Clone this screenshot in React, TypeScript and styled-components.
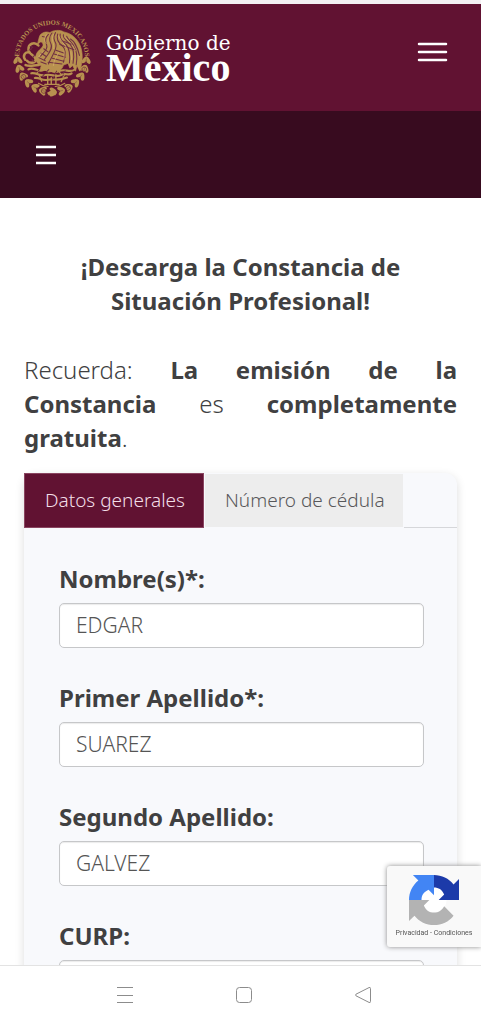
import React, { useState } from "react";
import styled, { createGlobalStyle } from "styled-components";

const GlobalStyle = createGlobalStyle`
  * { box-sizing: border-box; }
  body {
    margin: 0;
    background: #fff;
    color: #404041;
    font-family: "Noto Sans", "Open Sans", sans-serif;
    font-size: 24px;
    line-height: 34px;
  }
  button { font: inherit; cursor: pointer; }
`;

const Screen = styled.div`
  display: flex;
  flex-direction: column;
  height: 100vh;
`;

const Page = styled.div`
  flex: 1;
  min-height: 0;
  overflow-y: auto;
  scrollbar-width: none;
  border-top: 4px solid #f3f0f3;
`;

const Header = styled.header`
  display: flex;
  align-items: center;
  justify-content: space-between;
  padding: 10px 32px 11px 10px;
  background: #611232;
`;

const Brand = styled.a`
  display: flex;
  align-items: center;
  gap: 11px;
  color: #fff;
  text-decoration: none;
`;

const Wordmark = styled.span`
  display: flex;
  flex-direction: column;
  font-family: "Liberation Serif", serif;
  font-weight: 700;
`;

const Country = styled.span`
  font-size: 40px;
  line-height: 29px;
`;

const Government = styled.span`
  font-family: "DejaVu Serif", serif;
  font-weight: 400;
  font-size: 20px;
  line-height: 20px;
`;

const IconButton = styled.button`
  display: flex;
  padding: 0;
  border: 0;
  background: none;
  color: ${(p) => p.color ?? "#fff"};
`;

const MenuButton = styled(IconButton)`
  align-self: flex-start;
  padding-top: 26px;
`;

const SubNav = styled.nav`
  display: flex;
  align-items: center;
  height: 87px;
  padding: 0 35px;
  background: #380b1f;
`;

const Main = styled.main`
  padding: 52px 24px 32px;
`;

const Title = styled.h1`
  margin: 0 0 35px;
  font-size: 24px;
  line-height: 34px;
  font-weight: 700;
  text-align: center;
`;

const Reminder = styled.p`
  margin: 0 0 18px;
  font-weight: 300;
  text-align: justify;

  strong { font-weight: 700; }
`;

const Card = styled.section`
  border-radius: 12px;
  background: #f8f9fc;
  box-shadow: 0 3px 10px rgba(0, 0, 0, 0.14);
`;

const TabList = styled.div`
  display: flex;
  align-items: flex-start;
  height: 55px;
  box-shadow: inset 0 -1px #d6d7da;
`;

const Tab = styled.button<{ $active: boolean }>`
  height: 55px;
  padding: 0 18px 2px 20px;
  border: 1px solid ${(p) => (p.$active ? "#8a4560" : "#f8f9fc")};
  background: ${(p) => (p.$active ? "#611232" : "#ededed")};
  color: ${(p) => (p.$active ? "#f3dfe8" : "#58585a")};
  font-size: 19px;
  font-weight: 300;
  white-space: nowrap;
`;

const Form = styled.form`
  display: flex;
  flex-direction: column;
  gap: 33px;
  padding: 34px 33px 34px 35px;
`;

const Field = styled.div`
  display: flex;
  flex-direction: column;
  gap: 7px;
`;

const Label = styled.label`
  font-weight: 700;
`;

const TextInput = styled.input`
  width: 100%;
  height: 45px;
  padding: 0 16px 2px;
  border: 1px solid #c6c7c9;
  border-radius: 5px;
  background: #fff;
  box-shadow: inset 0 1px 1px rgba(0, 0, 0, 0.08);
  color: #555;
  font: 300 21px "Noto Sans", "Open Sans", sans-serif;
`;

const Badge = styled.aside`
  position: fixed;
  right: 0;
  bottom: 77px;
  display: flex;
  flex-direction: column;
  align-items: center;
  gap: 2px;
  width: 94px;
  height: 81px;
  padding-top: 9px;
  border-radius: 3px 0 0 3px;
  background: #f9f9f9;
  box-shadow: 0 0 5px #8a8a8a;
`;

const BadgeLinks = styled.div`
  color: #555;
  font: 7px/12px Roboto, sans-serif;
  white-space: nowrap;

  a { color: inherit; text-decoration: none; }
`;

const SystemBar = styled.footer`
  display: flex;
  align-items: center;
  justify-content: center;
  gap: 101px;
  height: 59px;
  padding-left: 6px;
  border-top: 1px solid #e3e3e3;
  background: #fff;
`;

const GOLD = "#b8914f";
const WINE = "#611232";

const leafAngles = Array.from({ length: 13 }, (_, i) => 6 + i * 14);

const Seal = () => (
  <svg width="85" height="86" viewBox="0 0 255 258" role="img" aria-label="Escudo Nacional" fill="none">
    <path id="legend" d="M27 131 A 99 99 0 1 1 225 131" />
    <text fill={GOLD} fontFamily="Liberation Serif" fontWeight="700" fontSize="20">
      <textPath href="#legend" startOffset="50%" textAnchor="middle">ESTADOS UNIDOS MEXICANOS</textPath>
    </text>
    {leafAngles.map((a, i) => {
      const flip = a > 90 ? 1 : -1;
      return (
        <g key={a} transform={`rotate(${a} 126 131) translate(229 131)`} fill={GOLD}>
          <ellipse cx="6" cy="0" rx="6" ry="12" transform={`rotate(${flip * 35})`} />
          <ellipse cx="-6" cy="0" rx="6" ry="12" transform={`rotate(${flip * -35})`} />
          {i % 3 === 1 && <circle r="7" stroke={WINE} strokeWidth="1.5" />}
          <path d="M0 -8V8" stroke="#7f4a3c" strokeWidth="1.5" />
        </g>
      );
    })}
    <path d="M111 236l15-8 15 8-5 8h-20z" fill={GOLD} />
    <g transform="translate(127 133) scale(1.07) translate(-129 -132)">
      <g stroke={GOLD} strokeLinecap="round" strokeLinejoin="round">
        <path
          fill={GOLD}
          strokeWidth="2"
          d="M92 74 C94 62 108 55 122 60 C132 53 150 51 161 58 C183 62 198 77 206 94 C215 115 215 139 206 168 L198 152 L194 168 L186 152 L178 159 L173 146 L160 151 C157 164 144 172 131 168 L117 171 L105 162 L94 166 L98 153 C85 147 80 136 83 124 C86 110 101 105 103 96 C104 90 101 86 96 86 L88 92z"
        />
        <path strokeWidth="7" d="M90 96C78 83 61 92 62 108C63 122 79 121 82 134C84 146 65 148 58 139M66 116C52 111 45 126 53 136M91 151C77 151 65 156 54 151" />
        <path strokeWidth="6" d="M62 163C76 154 88 172 104 165S131 177 148 168S177 174 191 164M70 174C85 171 94 184 110 179S139 187 153 179S173 182 183 174M80 187C96 186 100 196 116 192S145 197 170 186" />
        <path strokeWidth="4" d="M116 178v27M139 178v27M108 205h40M92 179l7 17M162 179l-8 18M126 186v17" />
        <path strokeWidth="3" d="M90 202c10 7 18 9 27 9M164 202c-10 7-18 9-27 9M101 157l-17 18M144 165l14 17" />
      </g>
      <g stroke="#713044" strokeWidth="3" strokeLinecap="round" strokeLinejoin="round">
        <path d="M101 71l6 1M118 65C109 74 108 84 113 94C118 107 104 116 96 126M128 61C121 69 119 82 125 91C132 105 116 122 107 135M138 60C130 72 134 81 139 91C143 109 128 123 118 148" />
        <path d="M144 64C139 79 149 91 158 98C169 108 166 125 160 143M151 64C148 76 158 85 168 94C179 107 179 126 177 145M160 66C157 74 169 83 179 93C190 106 190 130 187 146M169 70C171 78 184 86 190 99C200 115 199 132 196 150M180 78C189 83 200 101 205 124" />
        <path d="M139 109l22 8M134 120l31 9M129 132l32 8M117 143l39 5M150 93l40 15M155 83l31 10M105 105l12 9M97 117l15 10M91 130l18 9M97 142l15 6" />
        <path d="M67 99l7 2M64 109l7-4M80 123l-6 6M78 141l-6-5M89 168l5-7M112 171l7-7M136 176l5-8M159 174l6-7M101 183l5-6M130 190l5-8M156 185l4-6" />
      </g>
      <g stroke="#e0bd76" strokeWidth="1.5" strokeLinecap="round">
        <path d="M112 66C105 75 107 86 112 91M132 65C124 81 136 91 133 105M147 69C152 83 163 91 169 104M163 72C178 85 188 95 194 111M146 116C142 127 134 134 132 152M162 111v24M181 113l2 23M101 114L90 129" />
      </g>
    </g>
  </svg>
);

const RecaptchaLogo = () => (
  <svg width="50" height="50" viewBox="0 0 64 64" aria-hidden="true">
    <circle cx="32" cy="32" r="16" fill="#fff" />
    <path fill="#1c3aa9" d="M32 0C42 0 51 4.500 57 12L64 5V32H38L45 25C42 18.500 38 16 32 16z" />
    <path fill="#4285f4" d="M0 32C0 22 4.500 13 12 7L5 0H32V26L25 19C18.500 22 16 26 16 32z" />
    <path fill="#b3b3b3" d="M0 32H26L19 39C22 45.500 26 48 32 48C38 48 42 45.500 45 40L57 52C51 60 42 64 32 64C22 64 13 59.500 7 52L0 59z" />
  </svg>
);

const fields = [
  { id: "nombre", label: "Nombre(s)*:", value: "EDGAR" },
  { id: "primer-apellido", label: "Primer Apellido*:", value: "SUAREZ" },
  { id: "segundo-apellido", label: "Segundo Apellido:", value: "GALVEZ" },
  { id: "curp", label: "CURP:", value: "" },
];

const tabs = ["Datos generales", "Número de cédula"];

export default function App() {
  const [active, setActive] = useState(0);

  return (
    <Screen>
      <GlobalStyle />
      <Page>
        <Header>
          <Brand href="#inicio">
            <Seal />
            <Wordmark>
              <Government>Gobierno de</Government>
              <Country>México</Country>
            </Wordmark>
          </Brand>
          <MenuButton type="button" aria-label="Abrir menú">
            <svg width="32" height="24" viewBox="0 0 32 24" stroke="currentColor" strokeWidth="2.500" strokeLinecap="round">
              <path d="M2 4H29M2 12H29M2 20H29" />
            </svg>
          </MenuButton>
        </Header>
        <SubNav>
          <IconButton type="button" aria-label="Abrir navegación">
            <svg width="22" height="22" viewBox="0 0 22 22" stroke="currentColor" strokeWidth="2.500">
              <path d="M1 3H21M1 11H21M1 19H21" />
            </svg>
          </IconButton>
        </SubNav>
        <Main>
          <Title>
            ¡Descarga la Constancia de Situación Profesional!
          </Title>
          <Reminder>
            Recuerda: <strong>La emisión de la Constancia</strong> es <strong>completamente gratuita</strong>.
          </Reminder>
          <Card>
            <TabList role="tablist">
              {tabs.map((name, i) => (
                <Tab key={name} type="button" role="tab" aria-selected={i === active} $active={i === active} onClick={() => setActive(i)}>
                  {name}
                </Tab>
              ))}
            </TabList>
            <Form>
              {fields.map((f) => (
                <Field key={f.id}>
                  <Label htmlFor={f.id}>{f.label}</Label>
                  <TextInput id={f.id} type="text" defaultValue={f.value} />
                </Field>
              ))}
            </Form>
          </Card>
        </Main>
      </Page>
      <Badge>
        <RecaptchaLogo />
        <BadgeLinks>
          <a href="#privacidad">Privacidad</a> - <a href="#condiciones">Condiciones</a>
        </BadgeLinks>
      </Badge>
      <SystemBar>
        <IconButton type="button" aria-label="Recientes" color="#8c8c8c">
          <svg width="18" height="18" viewBox="0 0 18 18" stroke="currentColor" strokeWidth="1">
            <path d="M1 1.500H17M1 9.500H17M1 16.500H17" />
          </svg>
        </IconButton>
        <IconButton type="button" aria-label="Inicio" color="#8c8c8c">
          <svg width="18" height="18" viewBox="0 0 18 18" fill="none" stroke="currentColor" strokeWidth="1">
            <rect x="1.500" y="1.500" width="15" height="15" rx="3" />
          </svg>
        </IconButton>
        <IconButton type="button" aria-label="Atrás" color="#8c8c8c">
          <svg width="18" height="18" viewBox="0 0 18 18" fill="none" stroke="currentColor" strokeWidth="1" strokeLinejoin="round">
            <path d="M2 8.200L15 1.600Q16.500 1 16.500 2.500V15.500Q16.500 17 15 16.400L2 9.800Q.8 9 2 8.200z" />
          </svg>
        </IconButton>
      </SystemBar>
    </Screen>
  );
}
